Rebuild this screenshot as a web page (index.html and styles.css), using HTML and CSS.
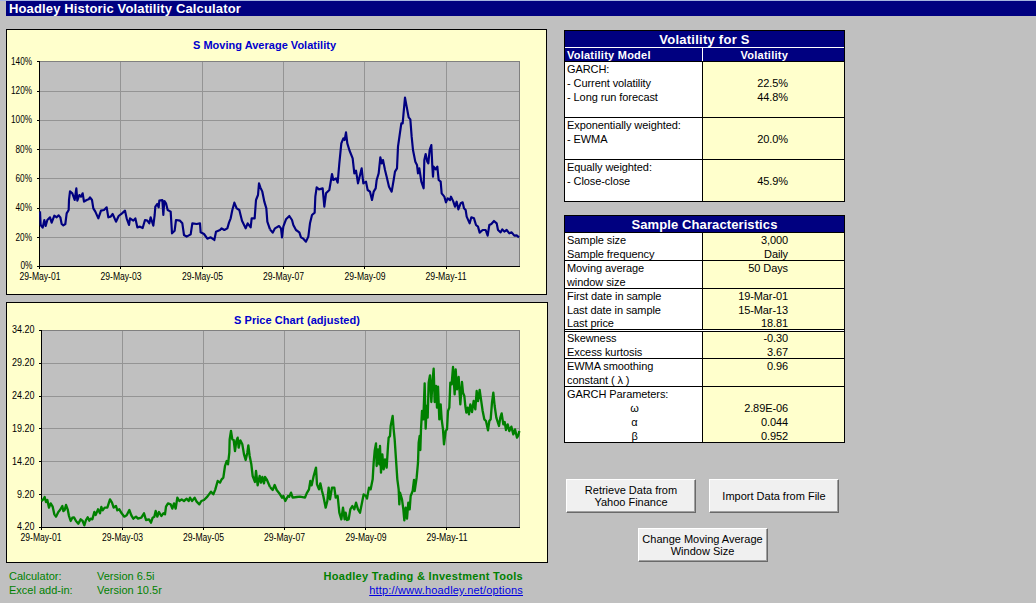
FILE: index.html
```
<!DOCTYPE html>
<html lang="en">
<head>
    <meta charset="UTF-8">
    <meta name="viewport" content="width=device-width, initial-scale=1.0">
    <title>Hoadley Historic Volatility Calculator</title>
    <link rel="stylesheet" href="styles.css">
</head>
<body>
    <h1 class="titlebar"><span>Hoadley Historic Volatility Calculator</span></h1>

    <div class="sheet">
        <div class="charts">
            <!-- Moving average volatility -->
            <svg class="chart" width="541" height="266" viewBox="6 29 541 266">
                <rect class="panel" x="6.5" y="29.5" width="540" height="265"/>
                <text class="chart-title" x="193" y="49" textLength="143">S Moving Average Volatility</text>
                <rect class="plot" x="39.5" y="61.5" width="480" height="205"/>
                <path class="grid" d="M40 91.5H519M40 120.5H519M40 149.5H519M40 178.5H519M40 208.5H519M40 237.5H519M120.5 62V266M202.5 62V266M283.5 62V266M364.5 62V266M446.5 62V266"/>
                <path class="axis" d="M39.5 61V269M37 266.5H520M37 61.5H40M37 91.5H40M37 120.5H40M37 149.5H40M37 178.5H40M37 208.5H40M37 237.5H40M120.5 266V269M202.5 266V269M283.5 266V269M364.5 266V269M446.5 266V269"/>
                <g class="labels">
                    <text x="11" y="65" textLength="21" lengthAdjust="spacingAndGlyphs">140%</text>
                    <text x="11" y="94" textLength="21" lengthAdjust="spacingAndGlyphs">120%</text>
                    <text x="11" y="123" textLength="21" lengthAdjust="spacingAndGlyphs">100%</text>
                    <text x="15.500" y="153" textLength="16.500" lengthAdjust="spacingAndGlyphs">80%</text>
                    <text x="15.500" y="182" textLength="16.500" lengthAdjust="spacingAndGlyphs">60%</text>
                    <text x="15.500" y="211" textLength="16.500" lengthAdjust="spacingAndGlyphs">40%</text>
                    <text x="15.500" y="241" textLength="16.500" lengthAdjust="spacingAndGlyphs">20%</text>
                    <text x="20.500" y="269" textLength="12" lengthAdjust="spacingAndGlyphs">0%</text>
                    <text x="19.500" y="280" textLength="41" lengthAdjust="spacingAndGlyphs">29-May-01</text>
                    <text x="100.500" y="280" textLength="41" lengthAdjust="spacingAndGlyphs">29-May-03</text>
                    <text x="182" y="280" textLength="41" lengthAdjust="spacingAndGlyphs">29-May-05</text>
                    <text x="263" y="280" textLength="41" lengthAdjust="spacingAndGlyphs">29-May-07</text>
                    <text x="344.500" y="280" textLength="41" lengthAdjust="spacingAndGlyphs">29-May-09</text>
                    <text x="425.500" y="280" textLength="41" lengthAdjust="spacingAndGlyphs">29-May-11</text>
                </g>
                <g class="series navy" transform="scale(.33333)">
                    <polyline points="120,634 122,675 128,683 133,660 137,678 142,660 150,652 155,668 163,647 170,652 176,646 181,652 185,672 190,676 196,672 200,640 206,630 207,600 210,574 217,580 224,600 229,565 232,602 238,585 243,590 248,580 252,605 260,600 266,598 270,592 276,600 280,625 286,635 295,655 303,632 312,630 320,622 325,652 332,650 338,642 348,665 356,648 366,640 375,632 380,655 387,675 390,655 400,662 406,655 412,682 420,680 428,684 435,660 442,662 448,670 452,652 460,677 464,645 466,620 472,612 476,622 478,602 487,600 490,645 493,603 498,610 503,630 512,635 516,700 524,692 528,660 540,662 547,670 552,705 560,710 572,703 577,670 590,672 600,670 602,697 612,702 622,716 632,712 643,720 648,695 660,690 665,685 673,690 682,685 687,668 692,655 697,630 703,608 710,625 718,630 726,662 737,685 743,670 752,682 755,655 764,655 768,600 774,585 777,550 781,562 787,575 793,605 799,625 802,665 810,688"/>
                    <polyline transform="translate(810 0)" points="0,688 8,698 15,685 27,678 33,685 36,712 40,680 48,658 58,648 66,660 70,675 78,690 88,697 93,712 100,716 108,725 115,710 120,670 126,645 134,638 136,590 140,562 147,568 158,565 163,620 168,580 178,570 186,522 190,540 198,535 203,548 208,490 214,430 220,415 224,420 228,397 232,430 238,450 248,475 253,520 258,512 264,550 275,505 280,550 288,545 293,570 300,575 306,600 311,575 317,565 320,540 326,520 331,472 335,490 339,480 345,510 350,530 357,560 365,575 371,540 375,515 381,505 384,440 389,405 394,370 398,370 402,325 405,293 410,320 416,352 421,358 425,410 429,450 436,485 441,495 444,520 448,505 454,545 461,565 463,480 467,462 472,485 475,490 479,450 484,435 487,500 489,530 491,500 497,508 502,500 506,540 512,545 515,580 523,590 528,607 533,595 540,600 543,590 550,605 555,620 560,605 565,628 572,610 578,607 582,625 587,630 590,650 599,670 604,652 612,655 618,675 624,680 629,698 638,690 647,690 653,707 658,675 664,672 672,663 680,670 684,690 692,697 697,688 703,695 710,690 718,700 725,697 733,707 740,706 747,712"/>
                </g>
            </svg>

            <!-- Adjusted price -->
            <svg class="chart" width="542" height="261" viewBox="6 302 542 261">
                <rect class="panel" x="6.5" y="302.5" width="541" height="260"/>
                <text class="chart-title" x="234" y="324" textLength="126">S Price Chart (adjusted)</text>
                <rect class="plot" x="41.5" y="330.5" width="478" height="197"/>
                <path class="grid" d="M42 363.5H519M42 396.5H519M42 428.5H519M42 461.5H519M42 494.5H519M122.5 331V527M203.5 331V527M284.5 331V527M365.5 331V527M446.5 331V527"/>
                <path class="axis" d="M41.5 330V530M39 527.5H520M39 330.5H42M39 363.5H42M39 396.5H42M39 428.5H42M39 461.5H42M39 494.5H42M122.5 527V530M203.5 527V530M284.5 527V530M365.5 527V530M446.5 527V530"/>
                <g class="labels">
                    <text x="12" y="333" textLength="22.500" lengthAdjust="spacingAndGlyphs">34.20</text>
                    <text x="12" y="366" textLength="22.500" lengthAdjust="spacingAndGlyphs">29.20</text>
                    <text x="12" y="399" textLength="22.500" lengthAdjust="spacingAndGlyphs">24.20</text>
                    <text x="12" y="432" textLength="22.500" lengthAdjust="spacingAndGlyphs">19.20</text>
                    <text x="12" y="465" textLength="22.500" lengthAdjust="spacingAndGlyphs">14.20</text>
                    <text x="17" y="498" textLength="17.500" lengthAdjust="spacingAndGlyphs">9.20</text>
                    <text x="17" y="530" textLength="17.500" lengthAdjust="spacingAndGlyphs">4.20</text>
                    <text x="20.500" y="541" textLength="41" lengthAdjust="spacingAndGlyphs">29-May-01</text>
                    <text x="102" y="541" textLength="41" lengthAdjust="spacingAndGlyphs">29-May-03</text>
                    <text x="183" y="541" textLength="41" lengthAdjust="spacingAndGlyphs">29-May-05</text>
                    <text x="264" y="541" textLength="41" lengthAdjust="spacingAndGlyphs">29-May-07</text>
                    <text x="345.500" y="541" textLength="41" lengthAdjust="spacingAndGlyphs">29-May-09</text>
                    <text x="426.500" y="541" textLength="41" lengthAdjust="spacingAndGlyphs">29-May-11</text>
                </g>
                <g class="series green" transform="translate(0 296) scale(.33333)">
                    <polyline points="124,615 130,610 134,603 138,618 142,612 147,635 152,622 158,632 163,655 168,662 175,648 180,642 187,630 190,645 194,642 198,627 203,640 207,660 212,675 217,665 222,664 228,675 235,683 242,670 248,675 253,688 258,672 263,664 268,674 272,668 277,670 283,648 287,657 294,640 300,652 304,633 308,643 314,635 322,635 330,610 336,620 341,635 348,630 352,643 358,640 365,652 373,662 380,658 388,642 394,658 400,668 408,662 414,668 424,665 432,652 438,672 447,670 453,680 458,665 463,662 467,645 472,662 477,648 484,660 490,652 495,655 498,632 504,622 512,625 517,638 522,622 527,638 532,605 538,615 545,610 552,615 560,608 566,615 570,605 576,615 584,605 590,617 598,625 604,615 612,612 622,602 633,587 640,595 646,580 653,555 660,560 665,550 670,545 675,510 680,495 684,505 688,470 689,430 693,405 697,430 701,432 705,465 709,435 713,425 716,455 721,433 727,445 732,475 737,492 742,470 745,448 749,480 754,505 758,540 765,558 768,525 773,568 779,540 783,560 787,543 792,562 795,543 800,550 810,573"/>
                    <polyline transform="translate(810 0)" points="0,573 8,582 14,567 20,582 30,595 36,605 40,600 46,615 54,600 58,602 63,590 68,605 80,603 90,602 105,605 110,592 117,580 121,555 125,568 131,540 138,515 141,565 147,580 151,562 156,585 160,600 167,635 172,615 176,575 180,610 186,575 193,575 197,605 203,600 208,650 214,670 219,635 224,670 227,650 231,672 236,670 241,640 247,630 253,640 258,620 264,640 270,650 276,620 281,595 288,600 291,608 297,575 302,580 308,550 311,500 314,465 318,442 320,510 324,460 328,505 330,450 333,530 337,475 341,520 345,490 350,515 354,450 356,425 360,420 362,390 368,360 371,400 374,430 378,490 382,550 386,580 388,625 390,590 396,610 400,640 403,673 407,635 411,668 415,620 419,640 422,600 428,585 432,552 434,585 440,545 444,500 446,440 449,420 451,462 453,400 456,345 460,370 464,262 467,398 470,330 473,365 476,260 480,238 484,318 488,250 491,218 494,318 498,270 501,335 504,272 508,370 512,325 515,370 519,400 522,445 527,405 531,400 534,345 538,335 541,260 545,265 549,213 554,295 557,220 561,280 566,243 571,325 576,258 579,290 583,300 586,330 589,350 593,335 597,355 601,325 606,348 611,315 616,340 620,285 624,315 629,282 633,310 638,345 643,370 648,375 654,403 658,375 662,370 666,320 670,290 674,330 679,365 687,390 691,365 695,352 700,385 704,378 708,402 713,385 718,405 724,392 730,415 735,400 741,425 745,418 748,405"/>
                </g>
            </svg>

            <div class="footer">
                <div class="versions">
                    <span>Calculator:</span><span>Version 6.5i</span>
                    <span>Excel add-in:</span><span>Version 10.5r</span>
                </div>
                <div class="brand">
                    <strong>Hoadley Trading &amp; Investment Tools</strong>
                    <a href="http://www.hoadley.net/options">http://www.hoadley.net/options</a>
                </div>
            </div>
        </div>

        <div class="side">
            <div class="table">
                <h2 class="white-line">Volatility for S</h2>
                <div class="row head">
                    <div class="name">Volatility Model</div>
                    <div class="value">Volatility</div>
                </div>
                <div class="row four">
                    <div class="name">GARCH:<br>- Current volatility<br>- Long run forecast</div>
                    <div class="value"><br>22.5%<br>44.8%</div>
                </div>
                <div class="row three">
                    <div class="name">Exponentially weighted:<br>- EWMA</div>
                    <div class="value"><br>20.0%</div>
                </div>
                <div class="row three">
                    <div class="name">Equally weighted:<br>- Close-close</div>
                    <div class="value"><br>45.9%</div>
                </div>
            </div>

            <div class="table">
                <h2>Sample Characteristics</h2>
                <div class="row two">
                    <div class="name">Sample size<br>Sample frequency</div>
                    <div class="value">3,000<br>Daily</div>
                </div>
                <div class="row two">
                    <div class="name">Moving average<br>window size</div>
                    <div class="value">50 Days</div>
                </div>
                <div class="row double">
                    <div class="name">First date in sample<br>Last date in sample<div class="tight">Last price</div></div>
                    <div class="value">19-Mar-01<br>15-Mar-13<div class="tight">18.81</div></div>
                </div>
                <div class="row short">
                    <div class="name"><div class="tight">Skewness</div>Excess kurtosis</div>
                    <div class="value"><div class="tight">-0.30</div>3.67</div>
                </div>
                <div class="row two">
                    <div class="name">EWMA smoothing<br>constant ( λ )</div>
                    <div class="value">0.96</div>
                </div>
                <div class="row four">
                    <div class="name">GARCH Parameters:<div class="greek">ω<br>α<br>β</div></div>
                    <div class="value"><br>2.89E-06<br>0.044<br>0.952</div>
                </div>
            </div>

            <div class="buttons">
                <button>Retrieve Data from<br>Yahoo Finance</button>
                <button>Import Data from File</button>
                <button>Change Moving Average<br>Window Size</button>
            </div>
        </div>
    </div>
</body>
</html>
```
FILE: styles.css
```
* {
    box-sizing: border-box;
}
body {
    margin: 0;
    height: 603px;
    overflow: hidden;
    background-color: #c0c0c0;
    border-top: 1px solid #a6b4e0;
    font-family: "Liberation Sans", Arial, sans-serif;
    font-size: 11px;
    color: #000;
}
.titlebar {
    margin: 0 0 0 6px;
    padding-left: 3px;
    height: 15px;
    line-height: 15px;
    background-color: #000080;
    color: #fff;
    font-size: 13px;
    letter-spacing: 0.14px;
}
.sheet {
    display: flex;
    padding: 13px 0 0 6px;
}
.charts {
    width: 542px;
}
.chart {
    display: block;
    margin-bottom: 7px;
}
.panel {
    fill: #ffffcc;
    stroke: #000;
    shape-rendering: crispEdges;
}
.plot {
    fill: #c0c0c0;
    stroke: #808080;
    shape-rendering: crispEdges;
}
.grid {
    fill: none;
    stroke: #949494;
    shape-rendering: crispEdges;
}
.axis {
    fill: none;
    stroke: #000;
    shape-rendering: crispEdges;
}
.chart-title {
    font-size: 11px;
    font-weight: bold;
    fill: #0000cc;
}
.labels {
    font-size: 10px;
}
.series {
    fill: none;
    stroke-width: 6.5;
    stroke-linejoin: round;
}
.navy {
    stroke: #000080;
}
.green {
    stroke: #008000;
    stroke-width: 7;
}
.footer {
    display: flex;
    justify-content: space-between;
    margin-top: -1px;
    padding: 0 25px 0 3px;
    line-height: 14px;
    color: #008000;
}
.versions {
    display: grid;
    grid-template-columns: 88px auto;
}
.brand {
    display: flex;
    flex-direction: column;
    align-items: flex-end;
}
.brand strong {
    letter-spacing: 0.3px;
}
.brand a {
    color: #0000e0;
    letter-spacing: 0.18px;
}
.side {
    width: 281px;
    margin: 1px 0 0 16px;
}
.table {
    margin-bottom: 13px;
    border: 1px solid #000;
    border-bottom: none;
}
.table h2 {
    margin: 0;
    height: 17px;
    line-height: 18px;
    border-bottom: 1px solid #000;
    background-color: #000080;
    color: #fff;
    font-size: 13px;
    letter-spacing: 0.1px;
    text-align: center;
}
.table .white-line {
    border-color: #fff;
    letter-spacing: 0.25px;
}
.row {
    display: grid;
    grid-template-columns: 138px 1fr;
    grid-template-rows: 100%;
    line-height: 14px;
    border-bottom: 1px solid #000;
}
.name {
    padding-left: 2px;
    background-color: #fff;
    border-right: 1px solid #000;
    letter-spacing: -0.08px;
    white-space: nowrap;
}
.value {
    padding-right: 56px;
    background-color: #ffffcc;
    letter-spacing: -0.1px;
    text-align: right;
}
.head {
    height: 14px;
    font-weight: bold;
}
.head .name,
.head .value {
    background-color: #000080;
    color: #fff;
    border-color: #fff;
    letter-spacing: 0.24px;
}
.two {
    height: 28px;
}
.three {
    height: 42px;
}
.four {
    height: 56px;
}
.short {
    height: 27px;
}
.double {
    height: 43px;
    border-bottom: 3px double #000;
    background-color: #fff;
}
.tight {
    line-height: 13px;
}
.greek {
    text-align: center;
}
.buttons {
    display: flex;
    flex-wrap: wrap;
    justify-content: center;
    gap: 15px 13px;
    padding: 23px 4px 0 0;
}
.buttons button {
    width: 130px;
    height: 34px;
    padding: 0;
    background-color: #f0f0f0;
    border: 1px solid #fff;
    border-right-color: #696969;
    border-bottom-color: #696969;
    box-shadow: inset -1px -1px 0 #a0a0a0;
    font: 11px/12px "Liberation Sans", Arial, sans-serif;
    color: #000;
}
```
